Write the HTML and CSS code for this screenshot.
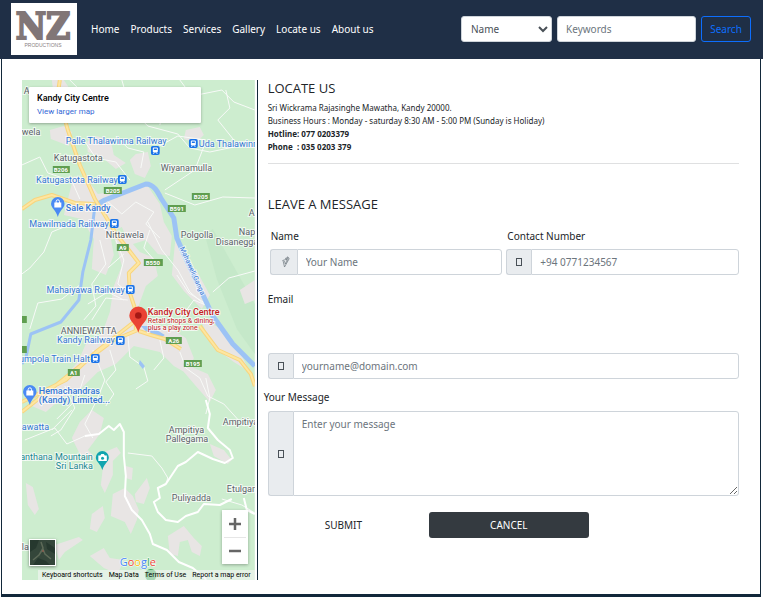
FILE: index.html
```html
<!DOCTYPE html>
<html lang="en">
<head>
<meta charset="utf-8">
<title>NZ Productions - Locate us</title>
<link rel="stylesheet" href="styles.css">
</head>
<body>
<header class="navbar">
  <a class="brand" href="#" aria-label="NZ Productions">
    <svg viewBox="0 0 66 52" width="66" height="52">
      <text class="brand-mark" x="32" y="36" text-anchor="middle">NZ</text>
      <text class="brand-sub" x="32" y="44" text-anchor="middle">PRODUCTIONS</text>
    </svg>
  </a>
  <nav class="links">
    <a href="#">Home</a>
    <a href="#">Products</a>
    <a href="#">Services</a>
    <a href="#">Gallery</a>
    <a href="#">Locate us</a>
    <a href="#">About us</a>
  </nav>
  <form class="search">
    <select class="control search-kind" aria-label="Search by"><option>Name</option></select>
    <input class="control search-words" type="text" placeholder="Keywords" aria-label="Keywords">
    <button class="search-btn" type="button">Search</button>
  </form>
</header>

<main class="page">
  <section class="map-col">
    <div class="map">
      <svg class="map-art" viewBox="22 80 233 500" preserveAspectRatio="xMidYMid slice">
        <defs>
          <symbol id="station" viewBox="0 0 9 9">
            <rect width="9" height="9" rx="2" fill="#1a73e8"/>
            <rect x="2" y="1.5" width="5" height="5" rx="1" fill="#fff"/>
            <rect x="3" y="2.5" width="3" height="1.5" fill="#1a73e8"/>
            <path d="M2.5 8l1-1.5M6.500 8l-1-1.500" stroke="#fff" stroke-width=".8"/>
          </symbol>
          <symbol id="shop" viewBox="0 0 14 20">
            <path d="M7 0a6.800 6.800 0 0 1 6.800 6.800C13.800 11 9 13 7 20 5 13 .2 11 .2 6.800A6.800 6.800 0 0 1 7 0z" fill="#4a8af4"/>
            <path d="M3.500 5.500h7v5h-7z" fill="#fff"/>
            <path d="M5.300 6V4.500a1.700 1.700 0 0 1 3.400 0V6" fill="none" stroke="#fff"/>
          </symbol>
        </defs>
        <rect x="22" y="80" width="233" height="500" fill="#cdedcf"/>
        <path d="M205 235l8-6 42 75v50l-18-25-20-50z" fill="#c5e8c9"/>
        <g class="urban">
          <path d="M52 80l12 0 8 12-8 8-10-4zM50 130l14-4 8 6-3 14-10-4-8-3zM87 142l10-6 14 5 3 14 12 8-10 6-14-12-14-5zM130 160l6-6 12-2 3 14-6 12-10-4zM186 130l14-3 4 8-8 8-12-4z"/>
          <path d="M74 176l14 4 10 14 34-6 16-2 12 18 4 18 8 14-2 20-12-2-12-14-16 5-8-18-12 6 4 22-8 20-14-6 2-30-12-20-18-4z"/>
          <path d="M112 228l16 10 12 14 14 6 4 18-12 10-8 22 10 16 22 4 16 10 8 20-6 16-14-8-14-14-26-6-18 18-18 8-16 16-20 10-16 14-14-6 22-18 24-26 8-18 16-10 8-22 4-26 8-20z"/>
          <path d="M176 235l8 20 14 18 12 22-8 14-18-18-12-16zM240 290l15-10v20l-10 4z"/>
          <path d="M200 318l20 10 20 24 10 20-16-10-22-16zM180 352l14 16 14 6 8 16-6 12-14-16-12-14z"/>
          <path d="M92 410l12 8-4 16-12 16 8 8-16-4-8-16 8-16zM105 452l12-5 4 6-8 8 0 14-8 18-4-8zM26 483l7 4 6 22-4 6-7-10zM113 494l12-6 8 8 6 14-2 10-6 14-6-12-14-6zM92 514l11-8 2 12-8 14-7-3zM126 466l7 2-1 12-6-2zM135 494l12-16 3 10-6 16-8-2zM168 536l16-10 10 12 8 8-2 10-8-4-4-12-8 2-2 14-8-2zM90 556l14-8 6 10 14 2-6 14-14-6zM55 545l24-8 4 3-18 12-6 8zM210 444l14 6 8 10-4 4-14-8z"/>
        </g>
        <g class="lane">
          <path d="M70 80l10 10 18 6 8 12 28 4 14 14 30 8 12 14 20 4 24-5M122 80l4 14 12 8 16-3 10 10-4 16M180 80l12 16 30-6 12 12 21 8M226 90l4 18-12 12 16 20"/>
          <path d="M22 165l18-8 8 16 24 8 8 18M84 140l12 18 20 4 14 18M116 136l12 12 16 4-3 16M152 150l26-14 28 4M205 144l-10 26-30 20M165 193l30 12 28-8 32 1M106 200l16 14 14-12 18 10-8 12 14 14"/>
          <path d="M76 222l-24 10-8 20-14 16-8 6M80 285l-18 14-24 4-8 26M100 240l6 24-14 20 4 22-12 14M116 240l8 20-6 24 12 10M108 268l16-14M88 304l20-12 16 8M92 320l14-22 22 2M148 222l14 28 16 20 12 22 14 12M150 230l-6 18 12 14M205 303l-16-10-12-18M213 292l16-14 26-7M178 322l16-22 14 6"/>
          <path d="M128 335l2 22 14 10 4 14-12 8M110 350l6 20-10 12 8 12-8 12M93 350l12 30-8 20M180 352l6 16 14 10 8 18 16 8 20 22 11-4M206 378l4 20-4 16M85 375l-8 24-20 20M65 386l10 22-14 22-10 6M95 404l-10 20 8 14M72 410l-20 20M25 440l30-12 12 16 18-8M160 340l4 18-10 12"/>
          <path d="M128 453l24 3 10 12 6 10-2 6M222 499l20 6 13 8"/>
        </g>
        <g class="road">
          <path d="M85 436l14-2 10-8 5 4 6-6 4 8 0 24 2 20-1 20 7 14 10 10 8 14 3 10 14 6 12 12 14 6 12 10 6 12"/>
          <path d="M206 400l4 14-2 14 10 12 12 10 3 8-8 5-12-4-15-7-12 10-8 4-12 18-8 4 2 10-6 4 4 10 8 8 12 2 8-6 12-4 6-8 16 1 12-6"/>
          <path d="M244 498l3 12 8 4"/>
        </g>
        <path class="stream" d="M95 206l-4 34-8 32-4 28-18 22-30 12-5 24-4 6"/>
        <path class="river" d="M95 206l10-6 41-16c8 0 12 8 15 14l13 20 3 20 8 18 14 30 14 30 20 28 22 22"/>
        <path d="M141 326l8 0 8 4 8 5-4 3-12-4zM140 360l5 6-2 3-4-5z" fill="#9cc3f5"/>
        <g class="highway-edge">
          <path d="M60 80l-2 14 10 36 12 35 15 34 13 21 9 15 12 15 10 13-10 10 1 20 6 18v20M22 209l13-9 17-5 23 8 20 1M138 330l-24 10-24 18-30 24-38 30M22 402l44-22 30-28 38-30M139 331l12 4 14 4 16 10M200 326l18 24 22 10 11 14 4 12"/>
        </g>
        <g class="highway">
          <path d="M60 80l-2 14 10 36 12 35 15 34 13 21 9 15 12 15 10 13-10 10 1 20 6 18v20M22 209l13-9 17-5 23 8 20 1M138 330l-24 10-24 18-30 24-38 30M22 402l44-22 30-28 38-30M139 331l12 4 14 4 16 10M200 326l18 24 22 10 11 14 4 12"/>
        </g>
        <g class="shield">
          <rect x="53" y="166" width="17" height="7"/><rect x="104" y="187" width="18" height="7"/><rect x="192" y="193" width="18" height="7"/><rect x="168" y="205" width="18" height="7"/><rect x="117" y="244" width="12" height="7"/><rect x="144" y="259" width="19" height="7"/><rect x="166" y="337" width="16" height="7"/><rect x="184" y="360" width="18" height="7"/><rect x="68" y="369" width="12" height="7"/><rect x="18" y="316" width="9" height="7"/><rect x="18" y="346" width="9" height="7"/>
        </g>
        <g class="shield-text">
          <text x="61" y="172">B206</text><text x="113" y="193">B205</text><text x="201" y="199">B205</text><text x="177" y="211">B591</text><text x="123" y="250">A9</text><text x="153" y="265">B550</text><text x="174" y="343">A26</text><text x="193" y="366">B195</text><text x="74" y="375">A1</text>
        </g>
        <g class="place">
          <text x="24" y="94">A</text>
          <text x="22" y="135">wela</text>
          <text x="54" y="161">Katugastota</text>
          <text x="161" y="171">Wiyanamulla</text>
          <text x="106" y="238">Nittawela</text>
          <text x="181" y="238">Polgolla</text>
          <text x="249" y="216">A</text>
          <text x="239" y="235">Nap</text>
          <text x="216" y="245">Disanegga</text>
          <text x="61" y="334">ANNIEWATTA</text>
          <text x="223" y="425">Ampitiya</text>
          <text x="169" y="433">Ampitiya</text>
          <text x="166" y="442">Pallegama</text>
          <text x="227" y="492">Etulgan</text>
          <text x="172" y="501">Puliyadda</text>
          <text x="22" y="550">la</text>
        </g>
        <g class="transit">
          <text x="66" y="144">Palle Thalawinna Railway</text>
          <text x="199" y="147">Uda Thalawinna</text>
          <text x="118" y="183" text-anchor="end">Katugastota Railway</text>
          <text x="109" y="227" text-anchor="end">Mawilmada Railway</text>
          <text x="125" y="293" text-anchor="end">Mahaiyawa Railway</text>
          <text x="115" y="343" text-anchor="end">Kandy Railway</text>
          <text x="90" y="362" text-anchor="end">Gumpola Train Halt</text>
          <text x="22" y="430">awatta</text>
          <text class="river-name" transform="translate(180 248) rotate(66)">Mahaweli Ganga</text>
        </g>
        <g class="poi">
          <text x="66" y="211">Sale Kandy</text>
          <text x="39" y="394">Hemachandras</text>
          <text x="39" y="403">(Kandy) Limited...</text>
        </g>
        <g class="sight">
          <text x="93" y="460" text-anchor="end">Hanthana Mountain</text>
          <text x="93" y="469" text-anchor="end">Sri Lanka</text>
        </g>
        <g class="target">
          <text class="target-name" x="148" y="315">Kandy City Centre</text>
          <text x="148" y="323">Retail shops &amp; dining,</text>
          <text x="148" y="330">plus a play zone</text>
        </g>
        <use href="#station" x="151" y="146" width="9" height="9"/>
        <use href="#station" x="189" y="139" width="9" height="9"/>
        <use href="#station" x="118" y="175" width="9" height="9"/>
        <use href="#station" x="110" y="219" width="9" height="9"/>
        <use href="#station" x="126" y="285" width="9" height="9"/>
        <use href="#station" x="116" y="336" width="9" height="9"/>
        <use href="#station" x="91" y="354" width="9" height="9"/>
        <use href="#shop" x="51" y="197" width="14" height="20"/>
        <use href="#shop" x="23" y="385" width="14" height="20"/>
        <path d="M102.500 451a6.500 6.500 0 0 1 6.500 6.500c0 4-4.500 6-6.500 12.500-2-6.500-6.500-8.500-6.500-12.500a6.500 6.500 0 0 1 6.500-6.500z" fill="#12a4af"/>
        <path d="M98.500 455.500h2l1-1.500h2.500l1 1.500h2v5.500h-8.500z" fill="#fff"/><circle cx="102.700" cy="458.200" r="1.500" fill="#12a4af"/>
        <path d="M138.500 306.500a9 9 0 0 1 9 9c0 6-6.500 8-9 17-2.500-9-9-11-9-17a9 9 0 0 1 9-9z" fill="#ea4335"/><circle cx="138.500" cy="315.500" r="3.300" fill="#a51915"/>
        <circle cx="151" cy="575" r="6" fill="#34a853"/>
        <text class="google" x="138" y="566" text-anchor="middle"><tspan fill="#4285f4">G</tspan><tspan fill="#ea4335">o</tspan><tspan fill="#fbbc05">o</tspan><tspan fill="#4285f4">g</tspan><tspan fill="#34a853">l</tspan><tspan fill="#ea4335">e</tspan></text>
      </svg>
      <div class="map-card">
        <strong>Kandy City Centre</strong>
        <a href="#">View larger map</a>
      </div>
      <button class="satellite" type="button" aria-label="Show satellite imagery">
        <svg viewBox="0 0 25 25" width="25" height="25">
          <rect width="25" height="25" fill="#34463a"/>
          <path d="M0 0h9l-3 8-6 4zM16 2l9 6v6l-8-5zM3 25l5-7 8 3 4 4z" fill="#26382e"/>
          <path d="M3 20l6-5 4-6 2 5 6 5M11 2l2 6-4 7" fill="none" stroke="#5d6a58" stroke-width="1.500"/>
          <circle cx="13" cy="11" r="1" fill="#8c5f50"/>
        </svg>
      </button>
      <div class="zoom">
        <button type="button" aria-label="Zoom in"><svg viewBox="0 0 12 12" width="12" height="12"><path d="M6 0v12M0 6h12" stroke="#666" stroke-width="2.500"/></svg></button>
        <button type="button" aria-label="Zoom out"><svg viewBox="0 0 12 12" width="12" height="12"><path d="M0 6h12" stroke="#666" stroke-width="2.500"/></svg></button>
      </div>
      <div class="map-terms">
        <a href="#">Keyboard shortcuts</a>
        <a href="#">Map Data</a>
        <a href="#">Terms of Use</a>
        <a href="#">Report a map error</a>
      </div>
    </div>
  </section>

  <section class="info">
    <h2>LOCATE US</h2>
    <address>
      Sri Wickrama Rajasinghe Mawatha, Kandy 20000.<br>
      Business Hours : Monday - saturday 8:30 AM - 5:00 PM (Sunday is Holiday)<br>
      <b>Hotline: 077 0203379</b><br>
      <b>Phone &nbsp;: 035 0203 379</b>
    </address>
    <hr>
    <h2>LEAVE A MESSAGE</h2>
    <form class="message">
      <div class="pair">
        <div class="field">
          <label for="name">Name</label>
          <div class="group">
            <span class="addon addon-wide"><svg viewBox="0 0 10 12" width="10" height="12"><path d="M2 4.500l1.500 6.500 4.500-8M1.500 4.500l7-2M4 2.500l4-1M6.500 .5l-1 4M3.500 5l.8 3 2.200-4" fill="none" stroke="#6c757d" stroke-width=".7"/></svg></span>
            <input class="control" id="name" type="text" placeholder="Your Name">
          </div>
        </div>
        <div class="field">
          <label for="phone">Contact Number</label>
          <div class="group">
            <span class="addon"><i class="box"></i></span>
            <input class="control" id="phone" type="tel" placeholder="+94 0771234567">
          </div>
        </div>
      </div>
      <div class="field email">
        <label for="email">Email</label>
        <div class="group">
          <span class="addon"><i class="box"></i></span>
          <input class="control" id="email" type="email" placeholder="yourname@domain.com">
        </div>
      </div>
      <div class="field body">
        <label for="text">Your Message</label>
        <div class="group">
          <span class="addon"><i class="box"></i></span>
          <textarea class="control" id="text" placeholder="Enter your message"></textarea>
        </div>
      </div>
      <div class="actions">
        <button class="btn" type="button">SUBMIT</button>
        <button class="btn btn-dark" type="button">CANCEL</button>
      </div>
    </form>
  </section>
</main>
</body>
</html>
```
FILE: styles.css
```css
* { box-sizing: border-box; }

body {
  margin: 0;
  background: #fff;
  color: #212529;
  font: 10px/16px "Noto Sans", "Open Sans", sans-serif;
}

a { text-decoration: none; }
input, select, textarea, button { font: inherit; }

/* Top bar */
.navbar {
  display: flex;
  align-items: center;
  height: 59px;
  padding: 0 12px 1px 11px;
  background: #1f2f46;
}
.brand { display: flex; background: #fff; }
.brand-mark { font: bold 37px "DejaVu Serif Condensed", "DejaVu Serif", serif; fill: #817677; stroke: #817677; stroke-width: 2px; }
.brand-sub { font: 5px "Liberation Sans", sans-serif; fill: #8b8283; }
.links { display: flex; gap: 11px; margin-left: 14px; }
.links a { color: #fff; white-space: nowrap; }
.search { display: flex; gap: 5px; margin-left: auto; }

.control {
  min-width: 0;
  height: 26px;
  padding: 0 8px;
  border: 1px solid #ced4da;
  border-radius: 3px;
  background: #fff;
  color: #495057;
}
.control::placeholder { color: #6c757d; opacity: 1; }
.search-kind { width: 91px; padding: 0 5px; }
.search-words { width: 139px; }
.search-btn {
  width: 50px;
  height: 26px;
  padding: 0;
  border: 1px solid #0d6efd;
  border-radius: 3px;
  background: none;
  color: #0d6efd;
}

/* Page frame */
.page {
  display: grid;
  grid-template-columns: 1fr 2fr;
  gap: 10px;
  margin: 0 2px 0 1px;
  padding: 21px 21px 14px 20px;
  border: solid #12283a;
  border-width: 0 1px 3px;
}
.map-col { padding-right: 2px; border-right: 1px solid #12283a; }

/* Map */
.map { position: relative; height: 500px; overflow: hidden; font-family: Roboto, sans-serif; }
.map-art { display: block; width: 100%; height: 100%; }
.urban { fill: #e8e5e4; }
.lane, .road, .highway, .highway-edge, .stream, .river { fill: none; stroke-linejoin: round; }
.lane { stroke: #f8faf8; stroke-width: 1; }
.road { stroke: #fff; stroke-width: 2; }
.stream { stroke: #9cc3f5; stroke-width: 3; }
.river { stroke: #9cc3f5; stroke-width: 5; }
.highway-edge { stroke: #f8d57e; stroke-width: 4; }
.highway { stroke: #fde6a1; stroke-width: 2; }
.shield { fill: #5f9e50; }
.shield-text { font: bold 6px Roboto, sans-serif; fill: #fff; text-anchor: middle; }
.place, .transit, .poi, .sight, .target { font: 9px Roboto, sans-serif; stroke: #fff; stroke-opacity: .7; stroke-width: 2px; paint-order: stroke; }
.place { fill: #5b6268; }
.transit { fill: #3577d4; }
.river-name { font-size: 7px; }
.poi { fill: #3577d4; font-weight: 500; }
.sight { fill: #1b8790; }
.target { fill: #c5221f; font-size: 7px; }
.target-name { font-size: 9px; font-weight: 500; }
.google { font: 500 11px "Open Sans", sans-serif; stroke: #fff; stroke-width: 1px; paint-order: stroke; }
.map-card {
  position: absolute;
  top: 7px;
  left: 7px;
  width: 172px;
  padding: 5px 8px;
  border-radius: 1px;
  background: #fff;
  box-shadow: 0 1px 3px rgba(0, 0, 0, .3);
  line-height: 13px;
}
.map-card strong { display: block; color: #000; font-size: 9px; font-weight: 500; }
.map-card a { display: block; color: #3367d6; font-size: 8px; }
.satellite {
  position: absolute;
  bottom: 14px;
  left: 7px;
  display: flex;
  padding: 0;
  border: 1px solid #fff;
  background: none;
  box-shadow: 0 1px 3px rgba(0, 0, 0, .4);
}
.zoom {
  position: absolute;
  right: 7px;
  bottom: 16px;
  width: 26px;
  padding: 0 2px;
  background: #fff;
  box-shadow: 0 1px 3px rgba(0, 0, 0, .3);
}
.zoom button { display: grid; place-items: center; width: 100%; height: 27px; padding: 0; border: 0; background: none; }
.zoom button + button { border-top: 1px solid #e6e6e6; }
.map-terms {
  position: absolute;
  right: 0;
  bottom: 0;
  display: flex;
  gap: 6px;
  padding: 0 4px;
  background: rgba(245, 245, 245, .6);
  font-size: 7px;
  line-height: 10px;
  white-space: nowrap;
}
.map-terms a { color: #000; }

/* Contact column */
h2 { margin: 0; font: 500 13px/17px "Open Sans", "Noto Sans", sans-serif; }
address { margin-top: 4px; font-size: 8px; font-style: normal; line-height: 13px; }
hr { margin: 10px 0 32px; border: 0; border-top: 1px solid #dfe0e1; }
.message { margin-top: 15px; }
.field { display: flex; flex-direction: column; min-width: 0; }
.pair { display: grid; grid-template-columns: 1fr 1fr; gap: 4px; padding-left: 2px; }
.pair .field { gap: 5px; }
.pair label { padding-left: 1px; }
.email { gap: 46px; margin-top: 16px; }
.body { gap: 6px; margin-top: 10px; }
.body label { margin-left: -4px; }
.group { display: flex; }
.group .control { flex: 1; border-radius: 0 3px 3px 0; }
.group textarea.control { height: 85px; padding: 4px 8px; resize: vertical; }
.addon {
  display: grid;
  place-items: center;
  width: 25px;
  border: solid #ced4da;
  border-width: 1px 0 1px 1px;
  border-radius: 3px 0 0 3px;
  background: #e9ecef;
}
.addon-wide { width: 27px; padding-left: 4px; }
.box { width: 6px; height: 8px; border: 1px solid #495057; }
.actions { display: grid; grid-template-columns: repeat(3, 1fr); gap: 6px; margin: 16px -15px 0 -4px; }
.btn { height: 26px; padding: 0; border: 0; border-radius: 3px; background: none; color: #212529; }
.btn-dark { background: #343a40; color: #fff; }
```
